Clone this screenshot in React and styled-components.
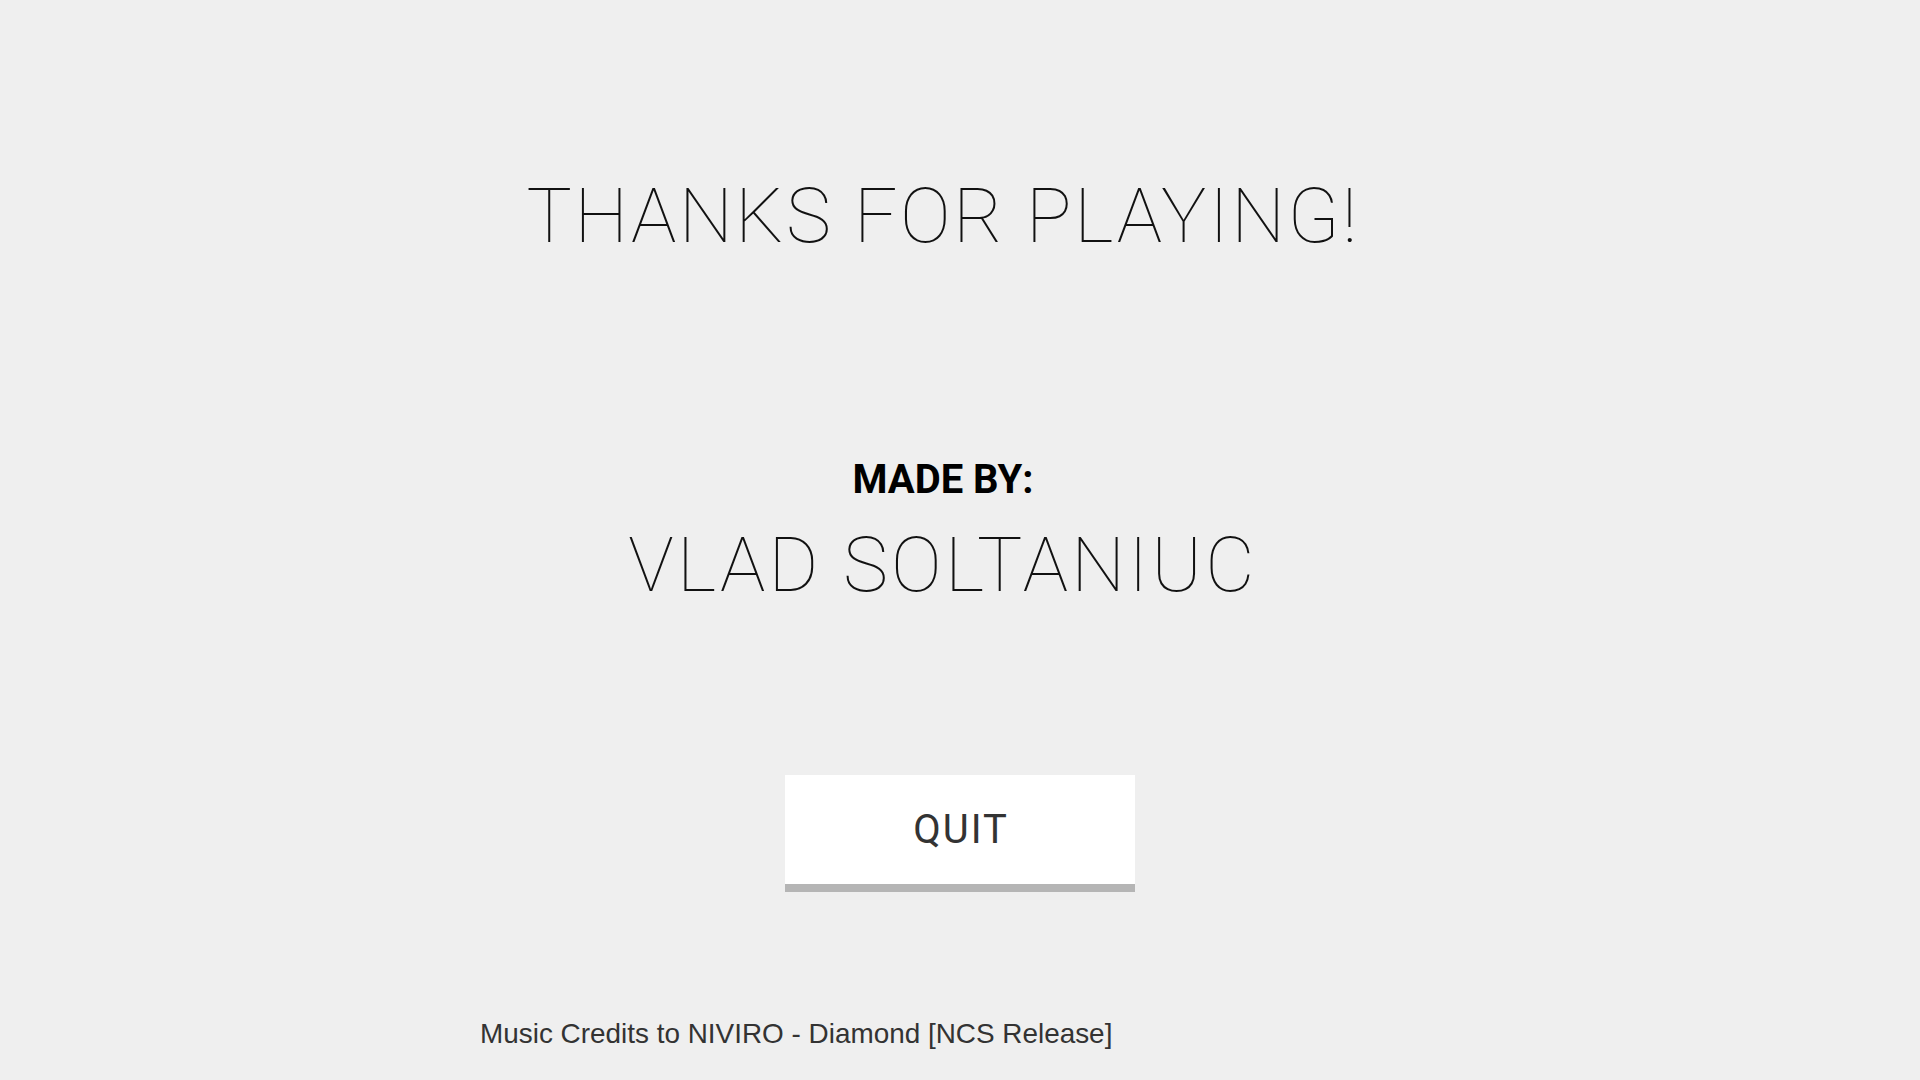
import React from "react";
import styled, { createGlobalStyle } from "styled-components";

const GlobalStyle = createGlobalStyle`
    html, body {
        margin: 0;
        padding: 0;
        background-color: #efefef;
    }
`

const StyledPage = styled.div`
    display: flex;
    flex-direction: column;
    align-items: center;
    width: 1920px;
    height: 1080px;
    overflow: hidden;
    font-family: Roboto, "Noto Sans", sans-serif;
`

const StyledTexts = styled.div`
    display: flex;
    flex-direction: column;
    align-items: center;
    padding-right: 34px;
`

const StyledTitle = styled.h1`
    margin: 178px 0 0;
    font-size: 76px;
    line-height: 76px;
    font-weight: 100;
    letter-spacing: 2.5px;
    color: #111;
`

const StyledLabel = styled.h3`
    margin: 206px 0 0;
    font-size: 40px;
    line-height: 40px;
    font-weight: 700;
    color: #000;
`

const StyledName = styled.h2`
    margin: 27px 0 0;
    font-size: 76px;
    line-height: 76px;
    font-weight: 100;
    letter-spacing: 3.2px;
    color: #111;
`

const StyledButton = styled.button`
    margin-top: 172px;
    width: 350px;
    height: 117px;
    padding: 0;
    border: none;
    border-bottom: 8px solid #b5b5b5;
    background-color: #fff;
    color: #333;
    font-family: Roboto, "Noto Sans", sans-serif;
    font-size: 40px;
    font-weight: 400;
    letter-spacing: 2px;
    text-indent: 2px;
    cursor: pointer;
`

const StyledFooter = styled.div`
    align-self: stretch;
    margin-top: 126px;
    padding-left: 480px;
`

const StyledCredits = styled.p`
    margin: 0;
    font-family: "Liberation Sans", Arial, sans-serif;
    font-size: 27.9px;
    line-height: 32px;
    color: #333;
`

const App = () => {
    return (
        <StyledPage>
            <GlobalStyle />
            <StyledTexts>
                <StyledTitle>THANKS FOR PLAYING!</StyledTitle>
                <StyledLabel>MADE BY:</StyledLabel>
                <StyledName>VLAD SOLTANIUC</StyledName>
            </StyledTexts>
            <StyledButton>QUIT</StyledButton>
            <StyledFooter>
                <StyledCredits>Music Credits to NIVIRO - Diamond [NCS Release]</StyledCredits>
            </StyledFooter>
        </StyledPage>
    )
}

export default App;
